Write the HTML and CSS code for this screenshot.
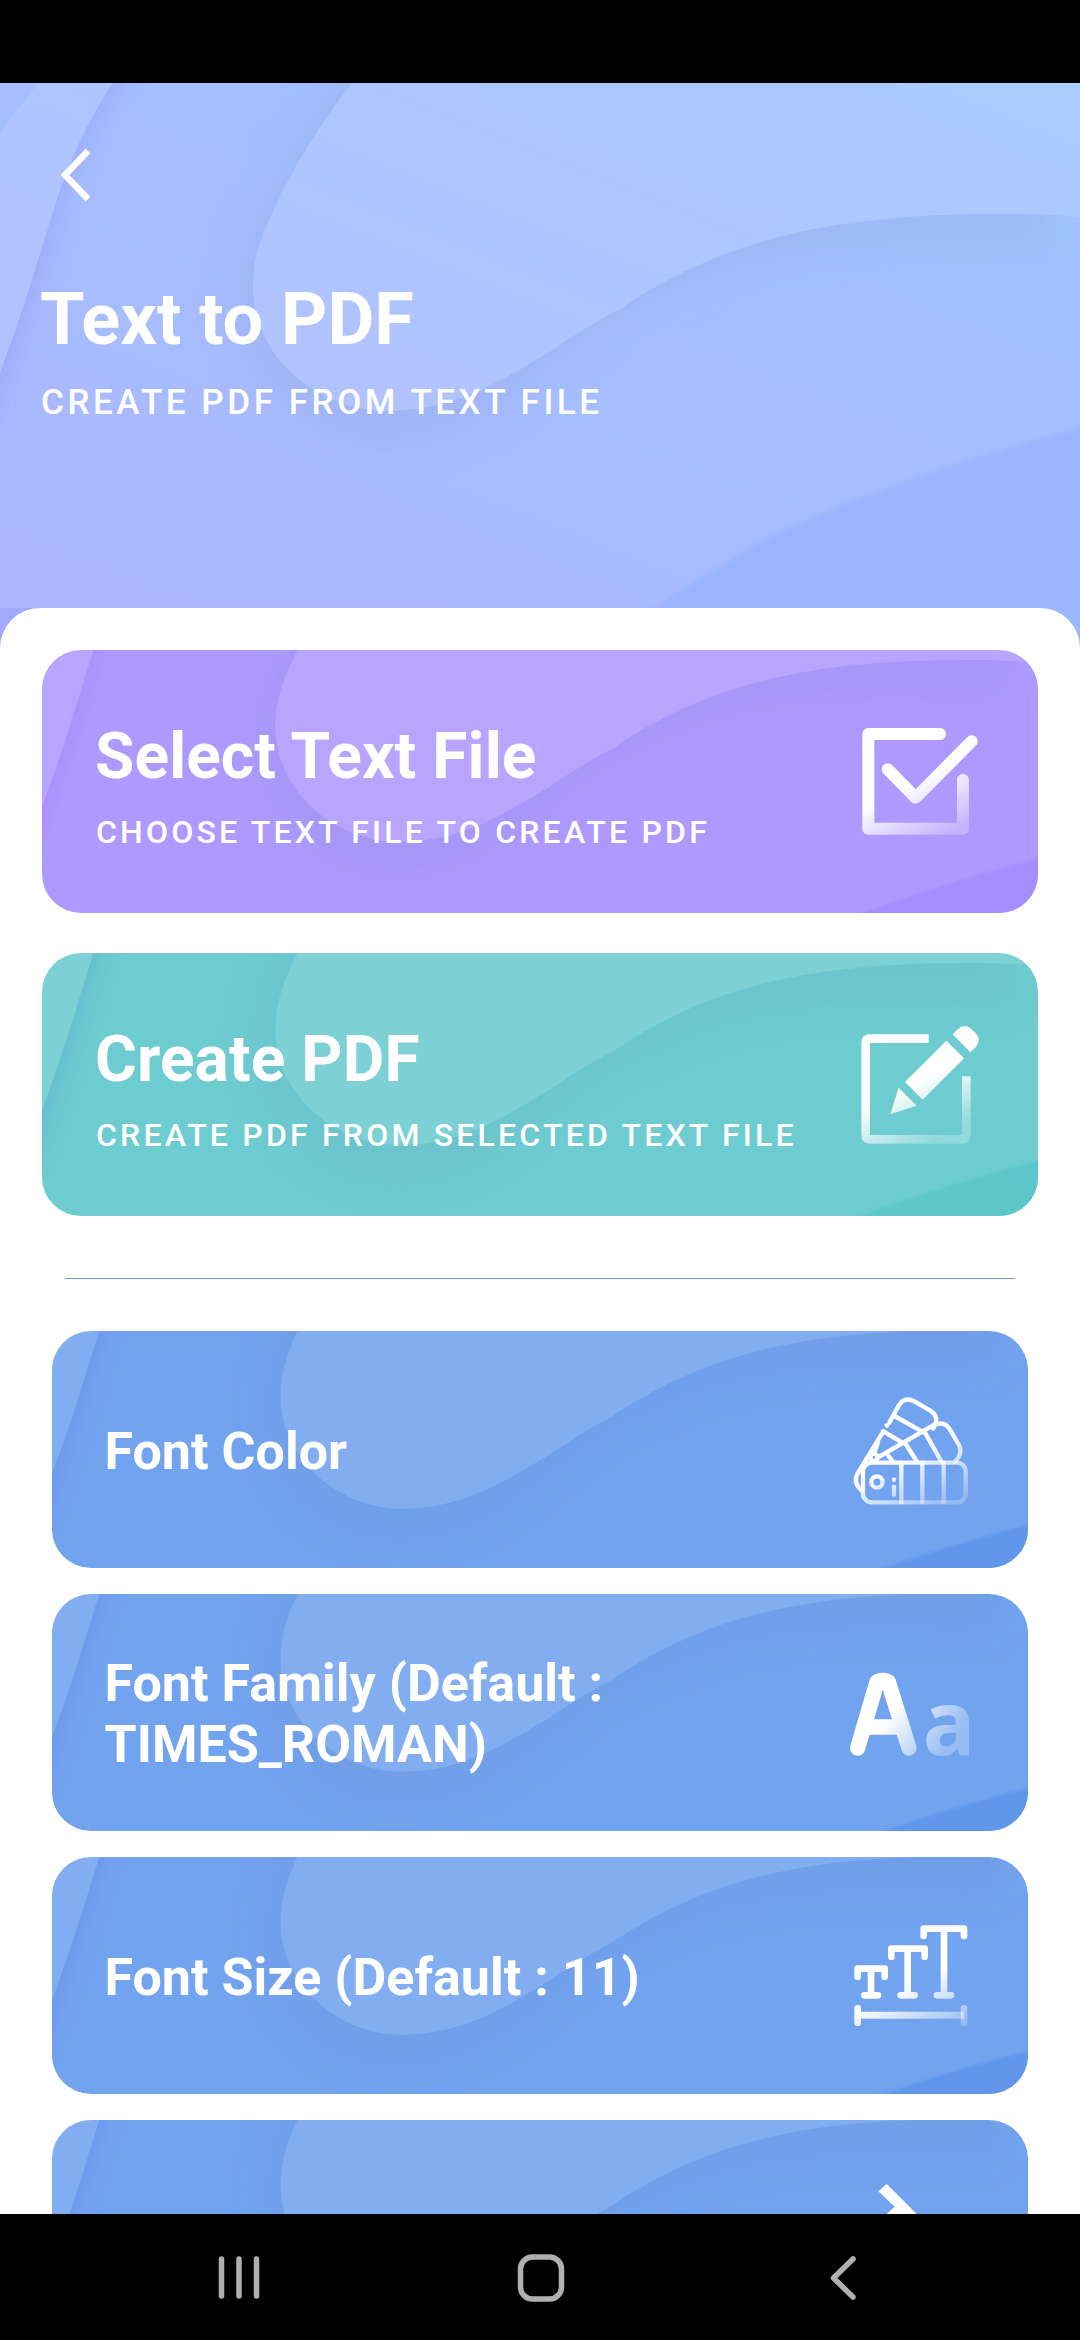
FILE: index.html
```html
<!DOCTYPE html>
<html lang="en">
<head>
<meta charset="utf-8">
<title>Text to PDF</title>
<link rel="stylesheet" href="styles.css">
</head>
<body>
<svg class="defs" width="0" height="0" aria-hidden="true">
  <defs>
    <filter id="soft" filterUnits="userSpaceOnUse" x="-100" y="-150" width="1280" height="800"><feGaussianBlur stdDeviation="20"/></filter>
    <filter id="soft-small" filterUnits="userSpaceOnUse" x="-100" y="-100" width="400" height="600"><feGaussianBlur stdDeviation="11"/></filter>
    <filter id="edge" filterUnits="userSpaceOnUse" x="500" y="200" width="700" height="450"><feGaussianBlur stdDeviation="2"/></filter>
    <clipPath id="outside-blob">
      <path clip-rule="evenodd" d="M0 0H1080V525H0ZM352 0C325 35 307 63 290 94C265 143 253 168 253 204C253 275 320 328 387 328C458 328 506 294 551 268C577 250 597 238 620 226C700 172 800 131 990 131Q1040 130 1080 134L1080 0Z"/>
    </clipPath>
    <clipPath id="outside-stripe">
      <path d="M113 0C86 40 72 75 60 107C38 175 28 215 0 290V525H1080V0Z"/>
    </clipPath>
    <linearGradient id="fade" gradientUnits="userSpaceOnUse" x1="250" y1="250" x2="330" y2="410">
      <stop offset="0" stop-color="#fff"/><stop offset="1" stop-color="#fff" stop-opacity=".26"/>
    </linearGradient>
    <linearGradient id="fade-letters" gradientUnits="userSpaceOnUse" x1="170" y1="240" x2="330" y2="350">
      <stop offset="0" stop-color="#fff"/><stop offset="1" stop-color="#fff" stop-opacity=".28"/>
    </linearGradient>
    <symbol id="waves" viewBox="0 0 1080 525" preserveAspectRatio="xMidYMid slice">
      <g clip-path="url(#outside-stripe)">
        <path class="wave-edge" filter="url(#soft-small)" d="M-60 -60H158L122 0C95 40 81 75 69 107C47 175 37 215 9 296L-10 350H-60Z"/>
      </g>
      <g clip-path="url(#outside-blob)">
        <path class="wave-shadow" filter="url(#soft)" d="M375 -60C310 10 232 130 234 225C238 305 306 366 380 366C510 364 570 245 655 224C760 164 900 164 1050 174L1050 -60Z"/>
      </g>
      <path class="wave-light" d="M38 0H113C86 40 72 75 60 107C38 175 28 215 0 290V50Z"/>
      <path class="wave-light" d="M352 0C325 35 307 63 290 94C265 143 253 168 253 204C253 275 320 328 387 328C458 328 506 294 551 268C577 250 597 238 620 226C700 172 800 131 990 131Q1040 130 1080 134L1080 0Z"/>
      <path class="wave-corner" filter="url(#edge)" d="M1090 343Q1020 361 964 379Q905 398 861 415Q825 429 792 444Q750 463 723 482Q690 501 630 540H1090Z"/>
    </symbol>
  </defs>
</svg>

<div class="status-bar"></div>

<header class="hero">
  <svg class="art"><use href="#waves"/></svg>
  <svg class="back" viewBox="0 0 34 56"><path d="M30 4L7 28L30 52"/></svg>
  <h1 class="hero-title">Text to PDF</h1>
  <p class="hero-sub">CREATE PDF FROM TEXT FILE</p>
</header>

<div class="sheet-backdrop">
<main class="sheet">
  <section class="actions">
    <article class="card action purple">
      <svg class="art"><use href="#waves"/></svg>
      <div class="card-text">
        <h2 class="action-title">Select Text File</h2>
        <p class="action-sub">CHOOSE TEXT FILE TO CREATE PDF</p>
      </div>
      <svg class="icon" width="180" height="163" viewBox="0 0 540 489">
        <path class="line w36" d="M330 102H115V386H399V240"/>
        <path class="line w36" d="M173 208L257 293L425 124"/>
      </svg>
    </article>
    <article class="card action teal">
      <svg class="art"><use href="#waves"/></svg>
      <div class="card-text">
        <h2 class="action-title">Create PDF</h2>
        <p class="action-sub">CREATE PDF FROM SELECTED TEXT FILE</p>
      </div>
      <svg class="icon" width="180" height="169" viewBox="0 0 540 507">
        <path class="solid" d="M296 103H120Q94 103 94 129V405Q94 431 120 431H396Q422 431 422 405V229H396V405H120V129H296Z"/>
        <path class="solid" d="M349 122L402 175L278 299L225 246ZM206 263L260 317L181 343ZM368 103L385 86Q402 71 421 84L439 102Q454 121 438 140L421 157Z"/>
      </svg>
    </article>
  </section>

  <hr class="divider">

  <section class="options">
    <article class="card option">
      <svg class="art"><use href="#waves"/></svg>
      <h3 class="option-title">Font Color</h3>
      <svg class="icon" width="180" height="159" viewBox="0 0 540 477">
        <g class="line w13">
          <rect x="99" y="278" width="308" height="119" rx="26"/>
          <path d="M214 278V397M277 278V397M341 278V397"/>
          <circle cx="141" cy="336" r="17"/>
          <path d="M192 350V374M192 328V330"/>
          <path d="M95 362Q68 337 82 312L160 184M178 158L206 107Q222 80 249 92L301 122Q326 138 315 164L309 176"/>
          <path d="M193 138L282 188M160 184L221 220M143 263L309 166Q344 150 360 179L387 225Q400 250 374 276M285 188L335 276M227 222L262 276M143 220L133 248M170 166L171 167"/>
          <circle cx="132" cy="262" r="11"/><path d="M174 256L188 274"/>
        </g>
      </svg>
    </article>
    <article class="card option">
      <svg class="art"><use href="#waves"/></svg>
      <h3 class="option-title">Font Family (Default : TIMES_ROMAN)</h3>
      <svg class="icon" width="180" height="145" viewBox="0 0 540 435">
        <path class="line letter-line" d="M83 324L141 126Q145 121 158 121Q170 121 175 126L237 324M112 261H206"/>
        <text class="glyph" font-size="270" textLength="158" lengthAdjust="spacingAndGlyphs" x="278" y="344">a</text>
      </svg>
    </article>
    <article class="card option">
      <svg class="art"><use href="#waves"/></svg>
      <h3 class="option-title">Font Size (Default : 11)</h3>
      <svg class="icon" width="180" height="151" viewBox="0 0 540 453">
        <g class="line w20">
          <path d="M83 230V206H164V230M123 206V286M103 286H144"/>
          <path d="M184 170V146H284V170M233 146V286M212 286H254"/>
          <path d="M281 108V86H402V108M342 86V286M321 286H363"/>
          <path d="M83 325V368M402 325V368"/>
        </g>
        <path class="solid" d="M83 335H402V356H83Z"/>
      </svg>
    </article>
    <article class="card option">
      <svg class="art"><use href="#waves"/></svg>
      <svg class="icon" width="180" height="257" viewBox="0 0 540 771">
        <path class="arrow" d="M170 222L300 352L240 400L170 312L194 290L145 244Z"/>
      </svg>
    </article>
  </section>
</main>
</div>

<nav class="nav-bar">
  <svg width="46" height="54" viewBox="0 0 46 54"><path d="M5.500 8V45M23 8V45M40.500 8V45"/></svg>
  <svg width="54" height="54" viewBox="0 0 54 54"><rect x="6.500" y="6" width="41" height="42" rx="12"/></svg>
  <svg width="40" height="54" viewBox="0 0 40 54"><path d="M30 8L10.500 27L30 46"/></svg>
</nav>
</body>
</html>
```
FILE: styles.css
```css
* { box-sizing: border-box; margin: 0; padding: 0; }

body {
  width: 1080px;
  height: 2340px;
  display: flex;
  flex-direction: column;
  overflow: hidden;
  background: #fff;
  color: #fff;
  font-family: Roboto, sans-serif;
}

.defs { position: absolute; }

.status-bar { flex: none; height: 83px; background: #000; }

/* Wave artwork shared by the header and every card */
.art { position: absolute; inset: 0; width: 100%; height: 100%; z-index: -1; }
.wave-light { fill: #fff; fill-opacity: .115; }
.wave-shadow { fill: #5a78a8; fill-opacity: .1; }
.wave-edge { fill: var(--edge, #6a60e0); fill-opacity: .17; }
.wave-corner { fill: var(--corner); }

.hero {
  --corner: #9ab4ff;
  flex: none;
  position: relative;
  isolation: isolate;
  height: 525px;
  padding: 64px 40px 0;
  background: linear-gradient(22deg, #acb6ff 4%, #a7bcff 38%, #a2c0ff 70%, #9fc6ff 100%);
}
.back { display: block; width: 34px; height: 56px; margin-left: 18px; fill: none; stroke: #fff; stroke-width: 6.500; }
.hero-title { margin-top: 75px; font-size: 72px; font-weight: 700; line-height: 84px; }
.hero-sub { margin: 20px 0 0 1px; font-size: 35px; font-weight: 500; line-height: 41px; letter-spacing: 3.550px; }

.sheet-backdrop {
  flex: 1;
  min-height: 0;
  background: linear-gradient(90deg, #9faaff, #9ab9ff);
}
.sheet {
  height: 100%;
  overflow: hidden;
  padding-top: 42px;
  background: #fff;
  border-radius: 40px 40px 0 0;
}

.card {
  position: relative;
  isolation: isolate;
  display: flex;
  align-items: center;
  justify-content: space-between;
  overflow: hidden;
  border-radius: 39px;
}

.actions { display: flex; flex-direction: column; gap: 40px; padding: 0 42px; }
.action { height: 263px; padding: 0 28px 0 54px; }
.purple { --corner: #a58fff; --edge: #8a60e8; background: #ae9aff; }
.teal { --corner: #5bc6cb; --edge: #4a70d0; background: #6dccd0; }
.card-text { white-space: nowrap; padding-top: 6px; width: 0; }
.action-title { margin-left: -1px; font-size: 64px; font-weight: 700; line-height: 75px; letter-spacing: .100px; }
.action-sub { margin-top: 19px; font-size: 32px; font-weight: 500; line-height: 38px; letter-spacing: 3.200px; }

.divider { height: 1px; margin: 62px 65px 52px; border: 0; background: #6f9ad8; }

.options { display: flex; flex-direction: column; gap: 26px; padding: 0 52px; }
.option { flex: none; height: 237px; padding: 0 18px 0 52.500px; --corner: #6197eb; --edge: #6a60e0; background: #72a3ef; }
.option:last-child { justify-content: flex-end; }
.option-title { width: 620px; padding-top: 3px; font-size: 52px; font-weight: 700; line-height: 61px; }

.icon { flex: none; overflow: visible; }
.line { fill: none; stroke: url(#fade); stroke-linecap: round; stroke-linejoin: round; }
.letter-line { stroke: url(#fade-letters); stroke-width: 46; }
.w36 { stroke-width: 36; }
.w20 { stroke-width: 20; }
.w13 { stroke-width: 13; }
.solid { fill: url(#fade); }
.arrow { fill: #fff; }
.glyph {
  font-family: "Open Sans", sans-serif;
  font-weight: 700;
  fill: url(#fade-letters);
}

.nav-bar {
  flex: none;
  height: 126px;
  padding: 1px 0 0 1px;
  display: grid;
  grid-template-columns: repeat(3, 302px);
  justify-content: center;
  align-items: center;
  justify-items: center;
  background: #000;
}
.nav-bar svg { fill: none; stroke: #b0b0b0; stroke-width: 5.500; stroke-linecap: round; stroke-linejoin: round; }
```
